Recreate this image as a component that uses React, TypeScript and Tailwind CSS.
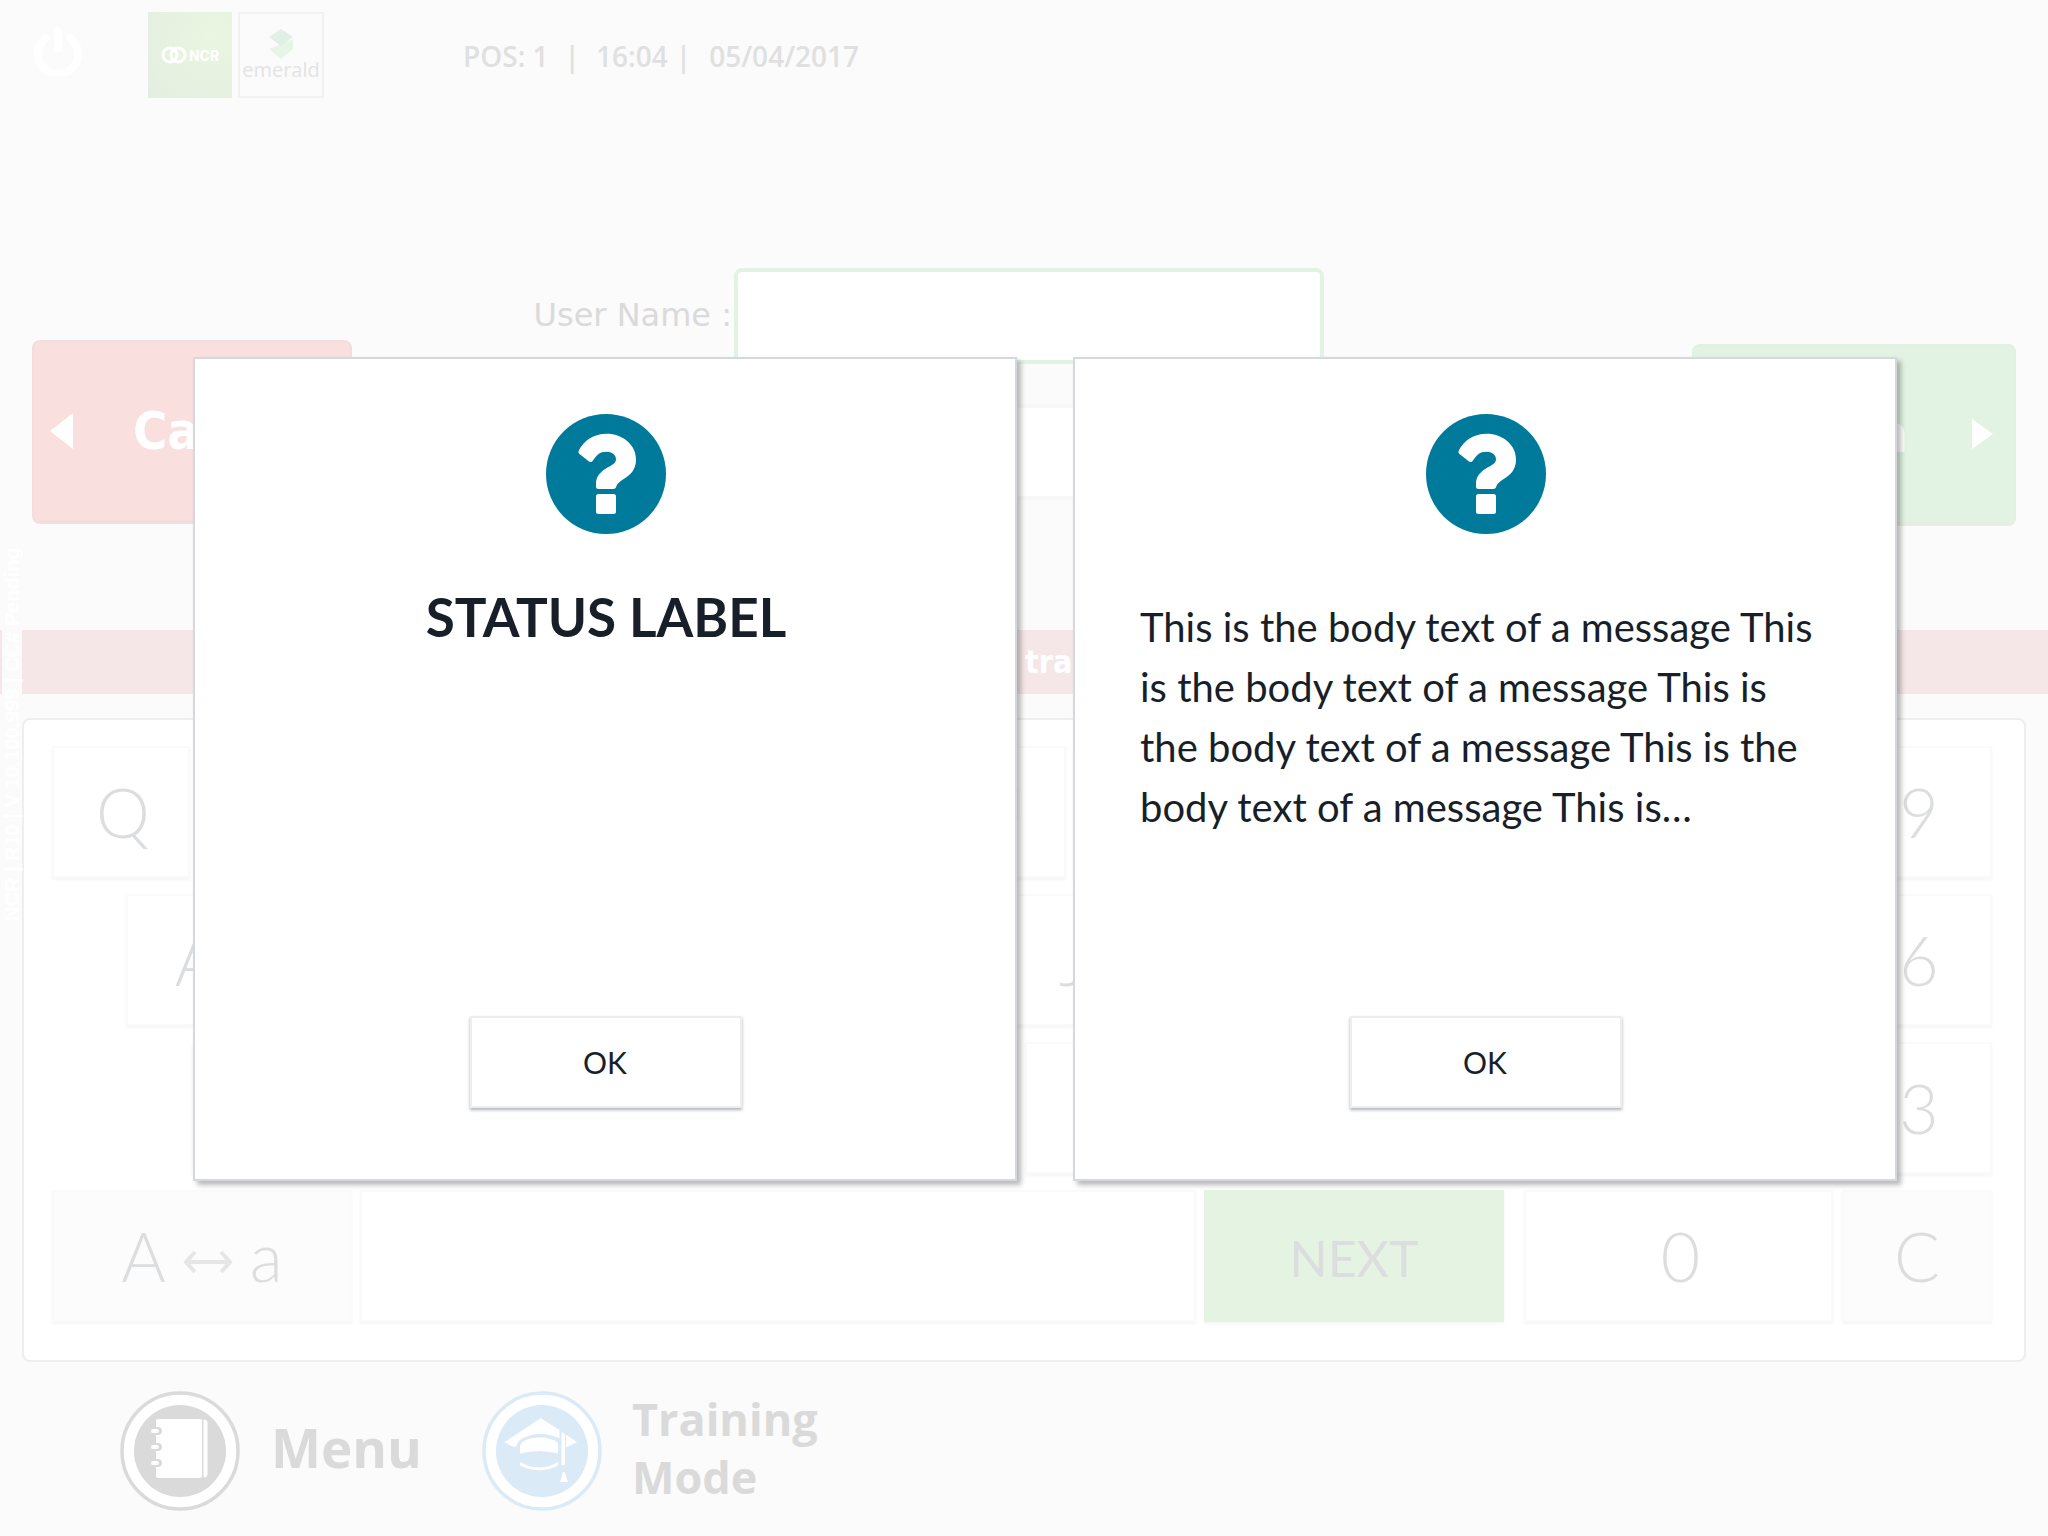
import React from "react";

type Key = { label?: string; grow: number; kind?: "gap" };

const letters = (row: string): Key[] => row.split("").map((label) => ({ label, grow: 134 }));

const letterRows: Key[][] = [
  letters("QWERTYUIOP"),
  [{ grow: 62, kind: "gap" }, ...letters("ASDFGHJKL"), { grow: 60, kind: "gap" }],
  [{ grow: 128, kind: "gap" }, { label: "-", grow: 91 }, ...letters("ZXCVBNM"), { label: "←", grow: 183 }],
];

const keyBase =
  "flex h-[132px] min-w-0 items-center justify-center border-2 border-[#fafafa] font-['Lato',sans-serif] text-[68px] leading-none font-light text-[#dcdddf] shadow-[0_2px_3px_#f6f6f6]";

function KeyButton({ item }: { item: Key }) {
  if (item.kind === "gap") {
    return <div className="basis-0 border-2 border-transparent" style={{ flexGrow: item.grow }} />;
  }
  return (
    <button type="button" className={`${keyBase} basis-0 bg-white`} style={{ flexGrow: item.grow }}>
      <span className="pl-1">{item.label}</span>
    </button>
  );
}

function QuestionIcon() {
  return (
    <svg viewBox="0 0 120 120" className="size-[120px] shrink-0" aria-hidden="true">
      <circle cx="60" cy="60" r="60" fill="#007a9a" />
      <path
        fill="#fff"
        d="M32.8 36.5C38.5 26.5 47 19.8 61 19.8C76 19.8 90 30.5 90 45.5C90 56 84.5 60.5 78.5 64.5C74 67.5 71.5 69 70 73.2Q69.3 75 67.5 75H52.5Q50 75 50 72.5V69.5C50 61 56.5 56.5 61.5 53.5C66 51 70 49 70 45.2C70 41 66 37.8 60.5 37.8C53.5 37.8 51 41 47 46.5Q45.2 49 43 47.5L33.5 40Q31.6 38.6 32.8 36.5Z"
      />
      <rect x="50" y="80" width="20" height="20" rx="2.5" fill="#fff" />
    </svg>
  );
}

function Dialog({ label, children }: { label: string; children: React.ReactNode }) {
  return (
    <section
      role="dialog"
      aria-label={label}
      className="flex min-h-[824px] w-[824px] flex-col items-center border-2 border-[#d5d8dc] bg-white pt-[55px] pr-[63px] pb-[71px] pl-[65px] font-['Lato',sans-serif] text-[#181f29] shadow-[4px_4px_5px_rgba(0,0,0,0.28)]"
    >
      <QuestionIcon />
      {children}
      <button
        type="button"
        className="mt-auto h-[92px] w-[272px] border-2 border-[#eeeeef] bg-white pr-0.5 text-[30px] shadow-[0_2px_3px_#aeb3bb]"
      >
        OK
      </button>
    </section>
  );
}

function Header() {
  return (
    <header className="flex items-start pt-3 pl-8">
      <button type="button" aria-label="Power" className="mt-3 mr-[64px]">
        <svg viewBox="0 0 52 52" className="size-[52px]" fill="none" stroke="#fff" strokeWidth="8" strokeLinecap="round">
          <path d="M26 7v17M14 14a20 20 0 1 0 24 0" />
        </svg>
      </button>
      <div className="flex gap-1.5">
        <div className="flex h-[86px] w-[84px] items-center justify-center gap-0.5 bg-[radial-gradient(circle_at_80%_30%,#eaf6e0,#e3eee1)] font-['Inter',sans-serif] text-[14px] font-bold text-white">
          <svg viewBox="0 0 26 18" className="h-[18px] w-[26px]" fill="none" stroke="#fff" strokeWidth="3">
            <circle cx="9" cy="9" r="7" />
            <circle cx="17" cy="9" r="7" />
          </svg>
          NCR
        </div>
        <div className="flex h-[86px] w-[86px] flex-col items-center border-2 border-[#f1f1f1] pt-[15px] font-['Open_Sans',sans-serif] text-[20px] leading-[22px] text-[#e3e3e3]">
          <svg viewBox="0 0 24 30" className="h-[30px] w-6 shrink-0">
            <path d="M12 15L24 10V20L12 30L0 20Z" fill="#e7f5e7" />
            <path d="M12 0L24 8L12 17L0 8Z" fill="#e0f0e4" />
          </svg>
          emerald
        </div>
      </div>
      <p className="mt-6 ml-[139px] flex font-['Open_Sans',sans-serif] text-[28px] leading-[40px] font-semibold text-[#e0e0e0]">
        <span>POS: 1</span>
        <span className="mx-4">|</span>
        <span>16:04</span>
        <span className="mr-[18px] ml-2">|</span>
        <span>05/04/2017</span>
      </p>
    </header>
  );
}

function MenuIcon() {
  return (
    <svg viewBox="0 0 120 120" className="size-[120px]" aria-hidden="true">
      <circle cx="60" cy="60" r="58" fill="#fff" stroke="#dadada" strokeWidth="3.5" />
      <circle cx="60" cy="60" r="46" fill="#dadada" />
      <rect x="36" y="28" width="46" height="59" rx="2" fill="#fff" />
      <path d="M83.500 28.500q4 0 4 3v52q0 3-4 3z" fill="#fff" />
      {[40, 56, 72].map((y) => (
        <g key={y}>
          <rect x="33" y={y - 4} width="9" height="8" rx="4" fill="#dadada" />
          <rect x="31" y={y - 2} width="8" height="4" rx="2" fill="#fff" />
        </g>
      ))}
    </svg>
  );
}

function TrainingIcon() {
  return (
    <svg viewBox="0 0 120 120" className="size-[120px]" aria-hidden="true">
      <circle cx="60" cy="60" r="58" fill="#fff" stroke="#daeaf7" strokeWidth="3.5" />
      <circle cx="60" cy="60" r="46" fill="#daeaf7" />
      <path
        fill="#fff"
        d="M58.700 27.300L77.500 39V47.500C66 41.500 48 40.500 37 50Q35 52 34.500 55L32 56L22 51.300ZM84 43.500L95 51.300L84 56.500ZM38 54C44 44.500 68 44.500 76 52V62.500Q58 57.500 38 62.500ZM38 71Q58 82 76 71V74.500Q58 84 38 74.500ZM79.500 41L83 43V74H79.500ZM80.800 81H82.600L86 91H78Z"
      />
    </svg>
  );
}

const inputClass = "h-24 w-full rounded-lg border-4 bg-white px-4 text-[32px] text-[#dadada] outline-none";

export default function App() {
  return (
    <div className="relative min-h-screen overflow-hidden bg-[#fbfbfb] font-['DejaVu_Sans',sans-serif]">
      <Header />

      <main>
        <div className="mt-[170px] flex items-start px-8">
          <button
            type="button"
            className="mt-[72px] flex h-[184px] w-80 items-center rounded-lg border-2 border-b-4 border-[#f3dddd] bg-[#fadfdf] pl-4 font-['DejaVu_Sans_Condensed','DejaVu_Sans',sans-serif] text-[52px] font-bold text-white"
          >
            <svg viewBox="0 0 23 36" className="mr-[60px] h-9 w-[23px] shrink-0" fill="#fff">
              <path d="M23 0V36L0 18Z" />
            </svg>
            Cancel
          </button>
          <form className="grid flex-1 grid-cols-[382fr_590fr_368fr] gap-y-10 text-[32px] text-[#dadada]">
            <label htmlFor="user" className="self-center pr-0.5 pb-0.5 text-right">
              User Name :
            </label>
            <input id="user" className={`${inputClass} border-[#e3f3e3]`} />
            <span />
            <label htmlFor="password" className="self-center pr-0.5 pb-0.5 text-right">
              Password :
            </label>
            <input id="password" type="password" className={`${inputClass} border-[#f8f8f8]`} />
          </form>
          <button
            type="button"
            className="mt-[76px] flex h-[182px] w-[324px] items-center justify-end rounded-lg border-2 border-b-4 border-[#e1f0e1] bg-[#e2f3e3] pr-[21px] font-['DejaVu_Sans_Condensed','DejaVu_Sans',sans-serif] text-[52px] font-bold text-white"
          >
            Login
            <svg viewBox="0 0 21 30" className="ml-[64px] h-[30px] w-[21px] shrink-0" fill="#fff">
              <path d="M0 0V30L21 15Z" />
            </svg>
          </button>
        </div>

        <div className="relative mt-[104px] flex h-16 items-center justify-center bg-[#f5e7e7] pr-4 font-['DejaVu_Sans_Condensed','DejaVu_Sans',sans-serif] text-[32px] font-bold text-white">
          POS 1 in training
          <div className="absolute top-[-80px] left-0.5 flex h-[371px] w-5 rotate-180 items-center bg-[#fbfbfb] font-['Liberation_Sans',sans-serif] text-[20px] leading-5 font-bold whitespace-nowrap text-white [writing-mode:vertical-rl]">
            NCR | R10 | V 10.100.999 | CC# Pending
          </div>
        </div>

        <div className="mt-6 mr-[22px] ml-[22px] flex gap-5 rounded-lg border-2 border-[#eeeeee] bg-white pt-[26px] pr-8 pb-[38px] pl-7">
          <div className="flex min-w-0 flex-[1452] flex-col gap-4">
            {letterRows.map((row, i) => (
              <div key={i} className="flex gap-2">
                {row.map((item, j) => (
                  <KeyButton key={j} item={item} />
                ))}
              </div>
            ))}
            <div className="flex gap-2">
              <button type="button" className={`${keyBase} flex-[296] gap-[17px] bg-[#fcfcfc]`}>
                A
                <svg viewBox="0 0 50 24" className="mt-3 h-6 w-[50px]" fill="none" stroke="#e6e6e6" strokeWidth="4">
                  <path d="M3 12H47M12 2L3 12L12 22M38 2L47 12L38 22" />
                </svg>
                a
              </button>
              <button type="button" aria-label="Space" className={`${keyBase} flex-[832] bg-white`} />
              <button
                type="button"
                className="flex h-[132px] flex-[296] items-center justify-center border-2 border-[#e5f3e3] bg-[#e5f3e3] pt-1 font-['Lato',sans-serif] text-[50px] leading-none text-[#dcdddf] shadow-[0_2px_3px_#f6f6f6]"
              >
                NEXT
              </button>
            </div>
          </div>
          <div className="grid min-w-0 flex-[468] grid-cols-3 content-start gap-x-[9px] gap-y-4">
            {"789456123".split("").map((n) => (
              <button key={n} type="button" className={`${keyBase} bg-white`}>
                <span className="pl-1">{n}</span>
              </button>
            ))}
            <button type="button" className={`${keyBase} col-span-2 bg-white`}>
              <span className="pl-1">0</span>
            </button>
            <button type="button" className={`${keyBase} bg-[#fcfcfc]`}>
              C
            </button>
          </div>
        </div>
      </main>

      <footer className="mt-[29px] flex items-center pl-[120px] font-['Open_Sans',sans-serif] font-bold text-[#dadada]">
        <button type="button" className="flex items-center gap-[31px] text-[53px]">
          <MenuIcon />
          <span className="-mt-1.5">Menu</span>
        </button>
        <button type="button" className="ml-[60px] flex items-center gap-[30px] text-left text-[45px] leading-[58px]">
          <TrainingIcon />
          <span className="-mt-1.5">
            Training
            <br />
            Mode
          </span>
        </button>
      </footer>

      <div className="absolute inset-0 flex items-start justify-center gap-14 pt-[357px] pl-[42px]">
        <Dialog label="Status label">
          <h2 className="mt-12 text-[53px] leading-[70px] font-bold">STATUS LABEL</h2>
        </Dialog>
        <Dialog label="Message">
          <p className="mt-[63px] w-full text-[40px] leading-[60px]">
            This is the body text of a message This is the body text of a message This is the body text of a message
            This is the body text of a message This is…
          </p>
        </Dialog>
      </div>
    </div>
  );
}
